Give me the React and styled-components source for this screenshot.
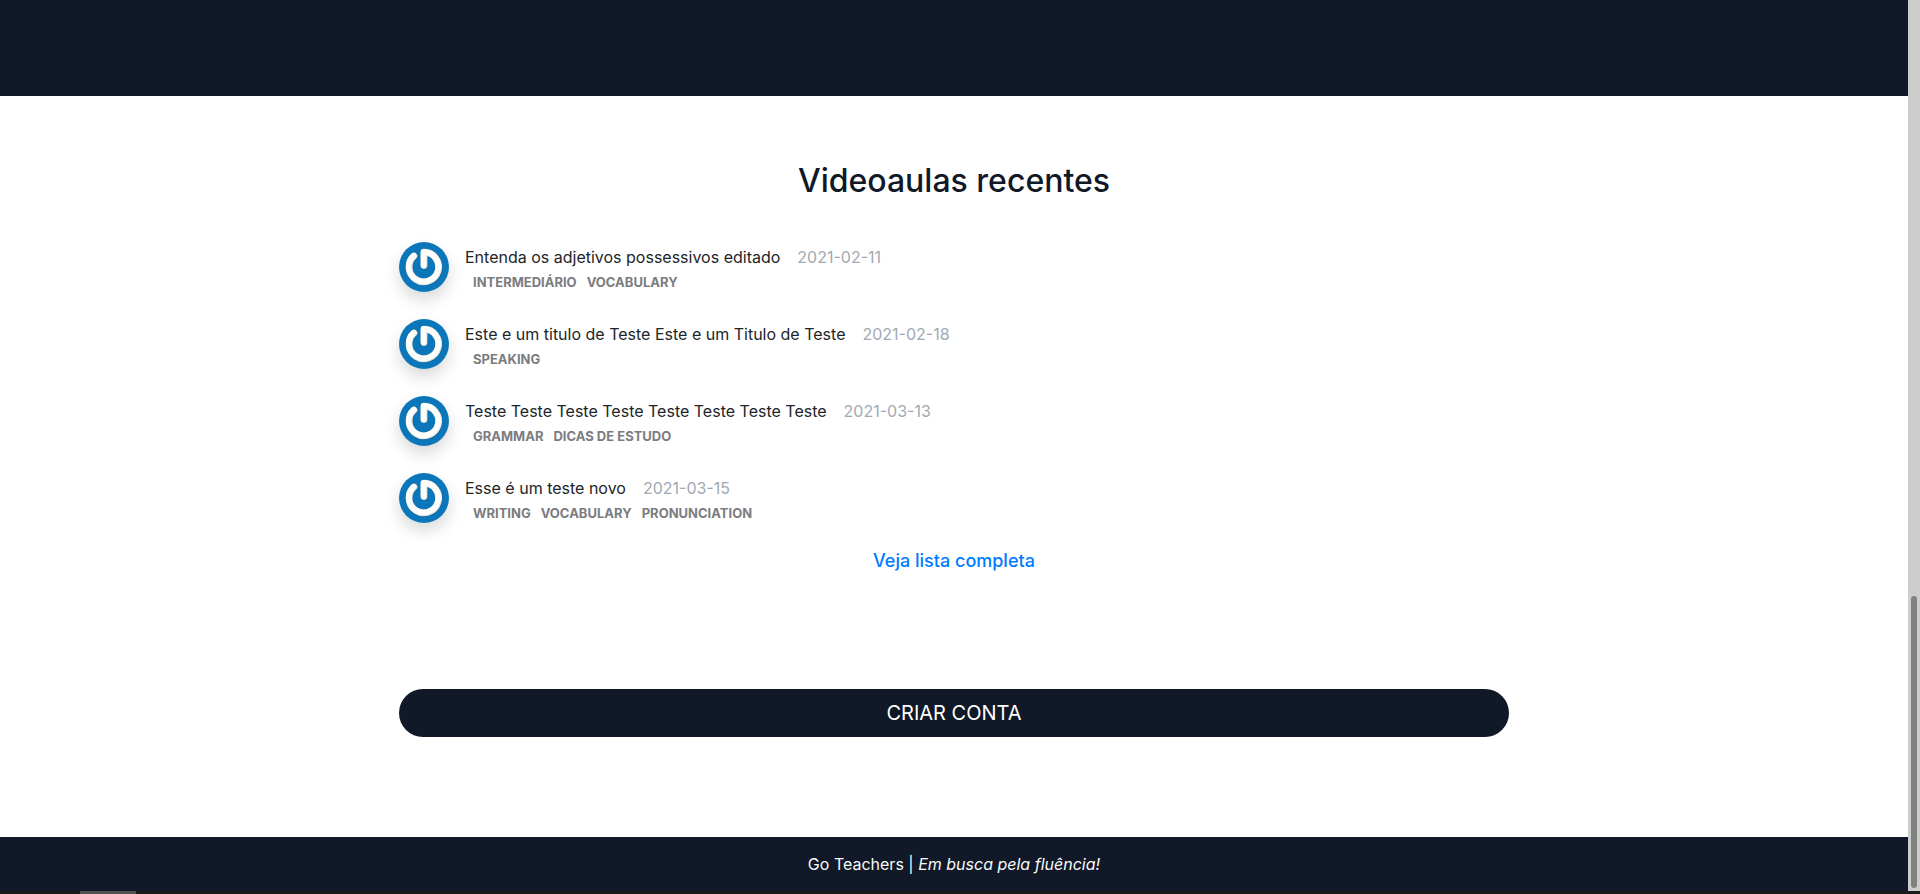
import React from "react";
import styled, { createGlobalStyle } from "styled-components";

const navy = "#111827";

const GlobalStyle = createGlobalStyle`
  *, *::before, *::after { box-sizing: border-box; }
  body {
    margin: 0;
    background: #fff;
    color: #212529;
    font-family: Inter, "Liberation Sans", sans-serif;
    font-size: 16px;
    line-height: 24px;
  }
`;

const Screen = styled.div`
  display: flex;
  flex-direction: column;
  min-height: 100vh;
`;

const Viewport = styled.div`
  display: flex;
  flex: 1;
`;

const Page = styled.div`
  display: flex;
  flex: 1;
  flex-direction: column;
  min-width: 0;
`;

const Banner = styled.header`
  height: 96px;
  background: ${navy};
`;

const Content = styled.main`
  flex: 1;
  width: 100%;
  max-width: 1142px;
  margin: 0 auto;
  padding: 65px 16px 100px;
`;

const Title = styled.h2`
  margin: 0 0 41px;
  color: ${navy};
  font-size: 32px;
  font-weight: 500;
  line-height: 40px;
  text-align: center;
`;

const LessonList = styled.ul`
  display: flex;
  flex-direction: column;
  gap: 24px;
  margin: 0;
  padding: 0;
  list-style: none;
`;

const Lesson = styled.li`
  display: flex;
  gap: 16px;
  min-height: 53px;
`;

const Avatar = styled.svg`
  flex: none;
  width: 50px;
  height: 50px;
  border-radius: 50%;
  box-shadow: 0 8px 16px rgba(0, 0, 0, 0.15);
`;

const Details = styled.div`
  padding-top: 3px;
`;

const Heading = styled.div`
  display: flex;
  flex-wrap: wrap;
  column-gap: 17px;
`;

const Published = styled.time`
  color: #9faab3;
`;

const Tags = styled.div`
  display: flex;
  flex-wrap: wrap;
  column-gap: 10px;
  padding: 3px 8px 0;
  color: #7b7c7f;
  font-size: 13px;
  font-weight: 700;
  line-height: 20px;
  text-transform: uppercase;
`;

const MoreLink = styled.a`
  display: block;
  width: fit-content;
  margin: 23px auto 116px;
  color: #007bff;
  font-size: 18px;
  font-weight: 500;
  text-decoration: none;
`;

const SignUpButton = styled.button`
  display: block;
  width: 100%;
  height: 48px;
  border: 0;
  border-radius: 24px;
  background: ${navy};
  color: #fff;
  font: inherit;
  font-size: 20px;
  text-transform: uppercase;
`;

const Footer = styled.footer`
  padding: 15px;
  background: ${navy};
  color: #f8f9fa;
  text-align: center;
`;

const ScrollTrack = styled.div`
  display: flex;
  flex: none;
  flex-direction: column;
  justify-content: flex-end;
  width: 12px;
  padding: 3px;
  background: #cdcdcd;
`;

const ScrollThumb = styled.div`
  height: 33%;
  border-radius: 3px;
  background: #7e8281;
`;

const BottomEdge = styled.div`
  height: 3px;
  padding-left: 80px;
  background: #1d1c1d;
`;

const EdgeHandle = styled.div`
  width: 56px;
  height: 3px;
  background: #545255;
`;

const lessons = [
  { title: "Entenda os adjetivos possessivos editado", date: "2021-02-11", tags: ["Intermediário", "Vocabulary"] },
  { title: "Este e um titulo de Teste Este e um Titulo de Teste", date: "2021-02-18", tags: ["Speaking"] },
  { title: "Teste Teste Teste Teste Teste Teste Teste Teste", date: "2021-03-13", tags: ["Grammar", "Dicas de estudo"] },
  { title: "Esse é um teste novo", date: "2021-03-15", tags: ["Writing", "Vocabulary", "Pronunciation"] },
];

const powerPath = "M15 14 A14.8 14.8 0 1 0 25 10.2 V23.6";

function GravatarIcon() {
  return (
    <Avatar viewBox="0 0 50 50" aria-hidden="true">
      <rect width="50" height="50" fill="#0b76b9" />
      <g fill="none" strokeLinecap="round" strokeLinejoin="round">
        <path d={powerPath} stroke="#075585" strokeOpacity="0.4" strokeWidth="7" transform="translate(0.5 0.5)" />
        <path d={powerPath} stroke="#e2e2dc" strokeWidth="6.8" />
        <path d={powerPath} stroke="#fdfdfb" strokeWidth="5.6" transform="translate(-0.4 -0.4)" />
      </g>
    </Avatar>
  );
}

export default function App() {
  return (
    <Screen>
      <GlobalStyle />
      <Viewport>
        <Page>
          <Banner />
          <Content>
            <Title>Videoaulas recentes</Title>
            <LessonList>
              {lessons.map((lesson) => (
                <Lesson key={lesson.date}>
                  <GravatarIcon />
                  <Details>
                    <Heading>
                      <span>{lesson.title}</span>
                      <Published dateTime={lesson.date}>{lesson.date}</Published>
                    </Heading>
                    <Tags>
                      {lesson.tags.map((tag) => (
                        <span key={tag}>{tag}</span>
                      ))}
                    </Tags>
                  </Details>
                </Lesson>
              ))}
            </LessonList>
            <MoreLink href="#lista">Veja lista completa</MoreLink>
            <SignUpButton type="button">Criar conta</SignUpButton>
          </Content>
          <Footer>
            Go Teachers | <em>Em busca pela fluência!</em>
          </Footer>
        </Page>
        <ScrollTrack>
          <ScrollThumb />
        </ScrollTrack>
      </Viewport>
      <BottomEdge>
        <EdgeHandle />
      </BottomEdge>
    </Screen>
  );
}
